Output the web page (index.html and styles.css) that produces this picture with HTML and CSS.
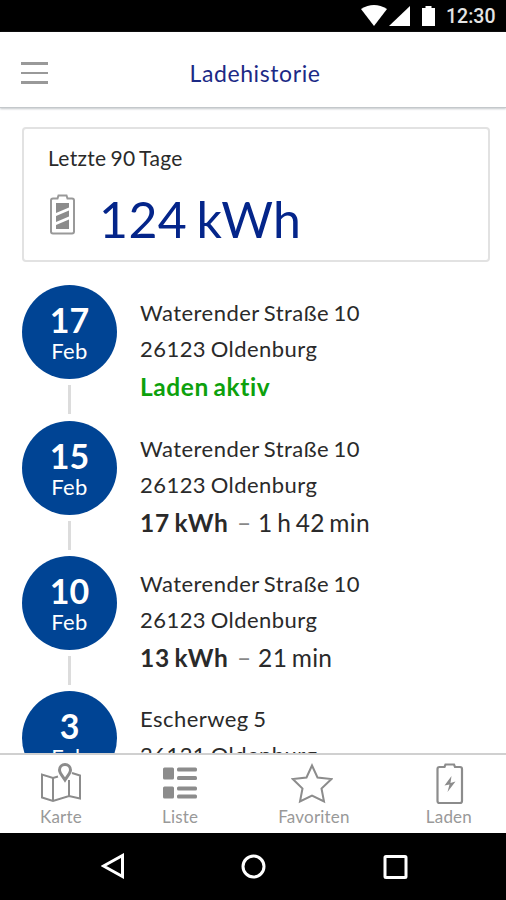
FILE: index.html
```html
<!DOCTYPE html>
<html lang="de">
<head>
    <meta charset="UTF-8">
    <meta name="viewport" content="width=device-width, initial-scale=1.0">
    <title>Ladehistorie</title>
    <link rel="stylesheet" href="styles.css">
</head>
<body>
    <div class="status-bar">
        <svg class="status-icons" width="75" height="22" viewBox="0 0 75 22" fill="#fff">
            <path d="M0 4Q13 -4 26 4L13 21Z"/>
            <path d="M49 1V21H28Z"/>
            <path d="M61 3H64.500V1H70.500V3H74V21H61Z"/>
        </svg>
        <span class="clock">12:30</span>
    </div>

    <header class="header">
        <button class="menu-button" aria-label="Menü">
            <span></span>
            <span></span>
            <span></span>
        </button>
        <h1>Ladehistorie</h1>
    </header>

    <main class="content">
        <section class="summary">
            <p class="summary-label">Letzte 90 Tage</p>
            <div class="summary-value">
                <svg width="26" height="42" viewBox="0 0 26 42">
                    <path d="M3 4.500H7.500L8.500 1.500H16.500L17.500 4.500H22Q24 4.500 24 6.500V37.500Q24 39.500 22 39.500H3Q1 39.500 1 37.500V6.500Q1 4.500 3 4.500Z" fill="none" stroke="#999" stroke-width="2"/>
                    <path d="M6 9H19V13.500L6 19ZM6 22L19 16.500V22.500L6 28ZM6 31L19 25.500V35H6Z" fill="#8c8c8c"/>
                </svg>
                <strong>124 kWh</strong>
            </div>
        </section>

        <ul class="history">
            <li class="entry">
                <div class="date"><b>17</b><span>Feb</span></div>
                <div class="details">
                    <p>Waterender Straße 10</p>
                    <p>26123 Oldenburg</p>
                    <p class="charge active">Laden aktiv</p>
                </div>
            </li>
            <li class="entry">
                <div class="date"><b>15</b><span>Feb</span></div>
                <div class="details">
                    <p>Waterender Straße 10</p>
                    <p>26123 Oldenburg</p>
                    <p class="charge"><b>17 kWh</b> <i>–</i> 1 h 42 min</p>
                </div>
            </li>
            <li class="entry">
                <div class="date"><b>10</b><span>Feb</span></div>
                <div class="details">
                    <p>Waterender Straße 10</p>
                    <p>26123 Oldenburg</p>
                    <p class="charge"><b>13 kWh</b> <i>–</i> 21 min</p>
                </div>
            </li>
            <li class="entry">
                <div class="date"><b>3</b><span>Feb</span></div>
                <div class="details">
                    <p>Escherweg 5</p>
                    <p>26121 Oldenburg</p>
                </div>
            </li>
        </ul>
    </main>

    <nav class="tabs">
        <a class="tab">
            <svg width="42" height="42" viewBox="0 0 42 42" fill="none" stroke="#8c8c8c" stroke-width="2">
                <path d="M18 13.500L13 15L2 11.500V34.500L13 38L29 33L40 35.500V12.500L32 10M13 15V38M29 17V33"/>
                <path d="M25 17C22 12.500 19.500 10 19.500 7A5.500 5.500 0 0 1 30.500 7C30.500 10 28 12.500 25 17Z" stroke-width="3"/>
            </svg>
            <span>Karte</span>
        </a>
        <a class="tab">
            <svg width="42" height="42" viewBox="0 0 42 42" fill="#8c8c8c">
                <rect x="4" y="4.500" width="11" height="12" rx="1.500"/>
                <rect x="18" y="4.500" width="20" height="4" rx="1.500"/>
                <rect x="18" y="13" width="20" height="4" rx="1.500"/>
                <rect x="4" y="23.500" width="11" height="12" rx="1.500"/>
                <rect x="18" y="23.500" width="20" height="4" rx="1.500"/>
                <rect x="18" y="31.500" width="20" height="4" rx="1.500"/>
            </svg>
            <span>Liste</span>
        </a>
        <a class="tab favoriten">
            <svg width="42" height="42" viewBox="0 0 42 42" fill="none" stroke="#8c8c8c" stroke-width="2">
                <path d="M21 2.500L26.500 14.500L40.500 16L30.500 25.500L33 38.500L21 32.500L9 38.500L11.500 25.500L1.800 16L15.500 14.500Z"/>
            </svg>
            <span>Favoriten</span>
        </a>
        <a class="tab">
            <svg width="42" height="42" viewBox="0 0 42 42" fill="none" stroke="#8c8c8c" stroke-width="2.200">
                <path d="M11.500 4H16.500L17.500 1.500H26L27 4H32Q34 4 34 6V38Q34 40 32 40H11.500Q9.500 40 9.500 38V6Q9.500 4 11.500 4Z"/>
                <path d="M23.500 13L16.500 22.500L21.500 21.500L19.500 29L27.500 18.500L22.500 20Z" fill="#8c8c8c" stroke="none"/>
            </svg>
            <span>Laden</span>
        </a>
    </nav>

    <div class="system-bar">
        <svg width="24" height="26" viewBox="0 0 24 26"><path d="M2.500 13L21.500 2.500V23.500Z"/></svg>
        <svg width="26" height="26" viewBox="0 0 26 26"><circle cx="12.500" cy="13.500" r="10.500"/></svg>
        <svg width="26" height="26" viewBox="0 0 26 26"><rect x="2" y="3.500" width="21" height="21" rx="1"/></svg>
    </div>
</body>
</html>
```
FILE: styles.css
```css
* {
    box-sizing: border-box;
}
body {
    display: flex;
    flex-direction: column;
    height: 900px;
    margin: 0;
    overflow: hidden;
    font-family: Lato, sans-serif;
    color: #2a2a2a;
    background-color: #fff;
}
h1, p, ul {
    margin: 0;
    padding: 0;
    font-weight: 400;
}
.status-bar {
    display: flex;
    flex: none;
    justify-content: flex-end;
    height: 32px;
    padding: 5px 11px 0 0;
    background-color: #000;
}
.clock {
    width: 49px;
    margin-left: 10px;
    font-family: Roboto, sans-serif;
    font-size: 19.5px;
    font-weight: 500;
    line-height: 23px;
    color: #e4e4e4;
}
.header {
    display: grid;
    flex: none;
    grid-template-columns: 48px 1fr 48px;
    align-items: center;
    height: 76px;
    padding-top: 7px;
    border-bottom: 1px solid #c4c8cb;
    box-shadow: 0 1px 2px #c4c8cb;
}
.menu-button {
    display: flex;
    flex-direction: column;
    gap: 7px;
    padding: 0 0 0 21px;
    border: none;
    background: none;
}
.menu-button span {
    width: 27px;
    height: 2.5px;
    background-color: #999;
}
.header h1 {
    padding-left: 4px;
    font-size: 23px;
    letter-spacing: 0.6px;
    text-align: center;
    color: #1c2a86;
}
.content {
    flex: 1;
    min-height: 0;
    padding: 19px 16px 0 22px;
    overflow: hidden;
}
.summary {
    height: 135px;
    padding: 16px 24px;
    border: 2px solid #e2e2e2;
    border-radius: 4px;
}
.summary-label {
    font-size: 21px;
    line-height: 26px;
    letter-spacing: 0.3px;
    word-spacing: -1.5px;
}
.summary-value {
    display: flex;
    align-items: center;
    gap: 23px;
    margin-top: 18px;
}
.summary-value svg {
    margin: -9px 0 0 2px;
}
.summary-value strong {
    font-size: 50px;
    font-weight: 400;
    line-height: 60px;
    letter-spacing: 0.4px;
    word-spacing: -4px;
    color: #04258a;
}
.history {
    margin-top: 23.2px;
    list-style: none;
}
.entry {
    position: relative;
    display: flex;
    gap: 23px;
    height: 135.4px;
}
/* line between two dates */
.entry:not(:last-child)::after {
    content: "";
    position: absolute;
    top: 100px;
    left: 46px;
    width: 3px;
    height: 29px;
    background-color: #dcdcdc;
}
.date {
    display: flex;
    flex: none;
    flex-direction: column;
    align-items: center;
    width: 95px;
    height: 94px;
    padding-top: 16px;
    border-radius: 50%;
    color: #fff;
    background-color: #004494;
}
.date b {
    font-size: 34px;
    line-height: 38px;
}
.date span {
    font-size: 22px;
    line-height: 23px;
    letter-spacing: 0.3px;
}
.details {
    padding-top: 10px;
    font-size: 22px;
    line-height: 36px;
    letter-spacing: 0.45px;
    word-spacing: -1.5px;
    white-space: nowrap;
}
.details .charge {
    margin-top: 2px;
    font-size: 24.5px;
    letter-spacing: 0.3px;
    word-spacing: -2px;
}
.charge b {
    letter-spacing: 0.7px;
}
.charge i {
    margin: 0 2px 0 4px;
    font-style: normal;
    color: #888;
}
.details .active {
    font-weight: 700;
    letter-spacing: 0.6px;
    color: #0da10d;
}
.tabs {
    display: flex;
    flex: none;
    justify-content: space-between;
    height: 80px;
    padding: 8px 34px 0 40px;
    border-top: 2px solid #d0d0d0;
    background-color: #fff;
}
.tab {
    display: flex;
    flex-direction: column;
    align-items: center;
    gap: 1px;
    font-size: 17px;
    line-height: 22px;
    letter-spacing: 0.2px;
    color: #999;
}
.tab svg {
    flex: none;
}
.favoriten {
    margin-right: -1px;
}
.favoriten svg {
    margin-right: 3px;
}
.system-bar {
    display: flex;
    flex: none;
    justify-content: space-between;
    height: 67px;
    padding: 20px 97px 0 101px;
    background-color: #000;
}
.system-bar svg {
    fill: none;
    stroke: #fff;
    stroke-width: 3;
}
```
